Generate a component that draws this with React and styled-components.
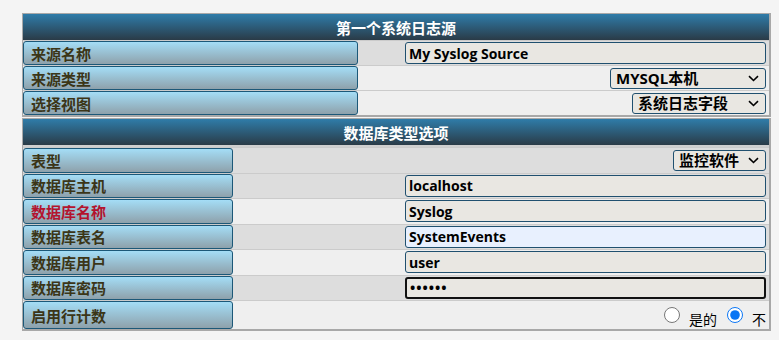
import React from "react";
import styled, { createGlobalStyle } from "styled-components";

const Global = createGlobalStyle`
  body {
    margin: 0;
    background: #f4f4f4;
    font-family: "Open Sans", "Noto Sans CJK SC", sans-serif;
  }
`;

const Page = styled.div`
  padding: 13px 0 0 22px;
  width: 749px;
`;

const Panel = styled.section`
  display: flex;
  flex-direction: column;
  border: 1px solid #a8a8a8;
  border-right-width: 2px;
  border-bottom-width: 2px;
  background: #cfcfcf;
  margin-bottom: 1px;
`;

const Head = styled.div`
  height: 26px;
  margin-bottom: ${(p) => p.$gap || 0}px;
  display: flex;
  align-items: center;
  justify-content: center;
  background: linear-gradient(#2f7ca9, #2a3b47);
  color: #fff;
  font-family: "Noto Sans CJK SC", sans-serif;
  font-weight: 700;
  font-size: 15px;
`;

const Row = styled.div`
  display: grid;
  grid-template-columns: ${(p) => p.$label}px 1fr;
  height: ${(p) => p.$h || 24}px;
  border-top: 1px solid #cbcbcb;
  background: ${(p) => (p.$dark ? "#dddddd" : "#efefef")};
`;

const Label = styled.div`
  display: flex;
  align-items: center;
  padding-left: 7px;
  border: 1px solid #1c5878;
  border-radius: 3px;
  background: linear-gradient(#a4ddf6, #8ea1ab);
  color: ${(p) => (p.$warn ? "#b3132e" : "#3b3517")};
  font-family: "Noto Sans CJK SC", sans-serif;
  font-weight: 700;
  font-size: 15px;
`;

const Value = styled.div`
  display: flex;
  align-items: center;
  justify-content: flex-end;
  padding-right: 3px;
`;

const Field = styled.input`
  box-sizing: border-box;
  width: 361px;
  height: 22px;
  padding: 0 3px;
  border: ${(p) => (p.$focus ? "2px solid #111" : "1px solid #20506f")};
  border-radius: 3px;
  background: ${(p) => (p.$fill ? "#e8f0fe" : "#e9e7e2")};
  color: #000;
  font-family: "Open Sans", "Noto Sans CJK SC", sans-serif;
  font-weight: 700;
  font-size: 14px;
  letter-spacing: ${(p) => (p.type === "password" ? "1px" : "0")};
  outline: none;
`;

const SelectWrap = styled.div`
  position: relative;
  display: flex;
`;

const Select = styled.select`
  appearance: none;
  box-sizing: border-box;
  width: ${(p) => p.$w}px;
  height: 21px;
  padding: 0 0 0 5px;
  border: 1px solid #20506f;
  border-radius: 3px;
  background: #e9e7e2;
  color: #000;
  font-family: "Open Sans", "Noto Sans CJK SC", sans-serif;
  font-weight: 700;
  font-size: 15px;
  line-height: 19px;
`;

const Chevron = styled.svg`
  position: absolute;
  right: 7px;
  top: 7px;
  pointer-events: none;
`;

const Radio = styled.input`
  width: 16px;
  height: 16px;
  margin: 0 9px 0 0;
  accent-color: #0b76f4;
`;

const RadioText = styled.span`
  margin: 7px 10px 0 0;
  font-family: "Noto Sans CJK SC", sans-serif;
  font-size: 14px;
  color: #000;

  &:last-child {
    margin-right: 0;
  }
`;

const Dropdown = ({ w, value }) => (
  <SelectWrap>
    <Select $w={w} defaultValue={value}>
      <option>{value}</option>
    </Select>
    <Chevron width="11" height="7" viewBox="0 0 11 7">
      <path d="M1 1.2 L5.5 5.5 L10 1.2" fill="none" stroke="#000" strokeWidth="1.6" />
    </Chevron>
  </SelectWrap>
);

const dbRows = [
  { label: "数据库主机", value: "localhost", dark: true },
  { label: "数据库名称", value: "Syslog", warn: true },
  { label: "数据库表名", value: "SystemEvents", dark: true, fill: true },
  { label: "数据库用户", value: "user" },
  { label: "数据库密码", value: "123456", dark: true, password: true },
];

export default function App() {
  return (
    <>
      <Global />
      <Page>
        <Panel>
          <Head>第一个系统日志源</Head>
          <Row $label={335} $dark>
            <Label>来源名称</Label>
            <Value>
              <Field defaultValue="My Syslog Source" />
            </Value>
          </Row>
          <Row $label={335}>
            <Label>来源类型</Label>
            <Value>
              <Dropdown w={156} value="MYSQL本机" />
            </Value>
          </Row>
          <Row $label={335}>
            <Label>选择视图</Label>
            <Value>
              <Dropdown w={134} value="系统日志字段" />
            </Value>
          </Row>
        </Panel>
        <Panel>
          <Head $gap={2}>数据库类型选项</Head>
          <Row $label={210} $h={24.5} $dark>
            <Label>表型</Label>
            <Value>
              <Dropdown w={93} value="监控软件" />
            </Value>
          </Row>
          {dbRows.map((r) => (
            <Row key={r.label} $label={210} $h={24.5} $dark={r.dark}>
              <Label $warn={r.warn}>{r.label}</Label>
              <Value>
                <Field
                  type={r.password ? "password" : "text"}
                  defaultValue={r.value}
                  $fill={r.fill}
                  $focus={r.password}
                />
              </Value>
            </Row>
          ))}
          <Row $label={210} $h={28}>
            <Label>启用行计数</Label>
            <Value>
              <Radio type="radio" name="rowcount" />
              <RadioText>是的</RadioText>
              <Radio type="radio" name="rowcount" defaultChecked />
              <RadioText>不</RadioText>
            </Value>
          </Row>
        </Panel>
      </Page>
    </>
  );
}
